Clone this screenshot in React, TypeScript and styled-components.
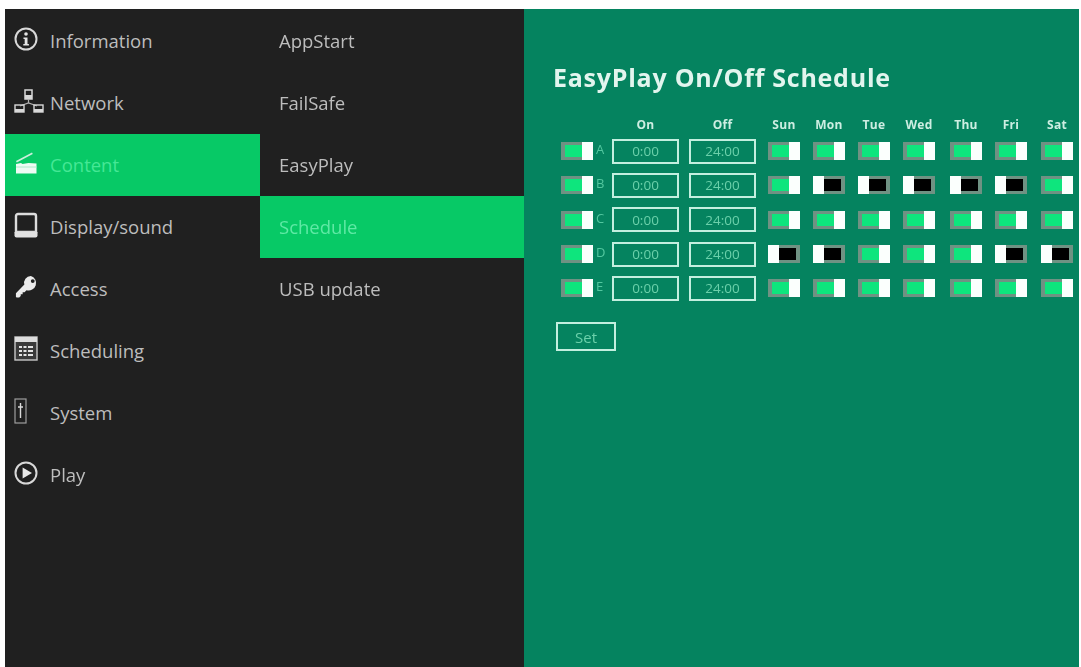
import { Fragment, ReactNode } from "react";
import styled, { createGlobalStyle } from "styled-components";

const GlobalStyle = createGlobalStyle`
  html, body {
    margin: 0;
    padding: 0;
    height: 100%;
    background: #fff;
    overflow: hidden;
    font-family: "Open Sans", "Noto Sans", sans-serif;
  }
`;

const Page = styled.div`
  display: grid;
  grid-template-columns: 519px 555px;
  height: 658px;
  padding: 9px 2px 0 5px;
  filter: blur(0.45px);
`;

const Sidebar = styled.div`
  display: grid;
  grid-template-columns: 255px 264px;
  background: #202020;
  padding-top: 1px;
`;

const NavList = styled.ul`
  list-style: none;
  margin: 0;
  padding: 0;
`;

const NavItem = styled.li<{ $active?: boolean }>`
  display: flex;
  align-items: center;
  height: 62px;
  box-sizing: border-box;
  padding-bottom: 2px;
  background: ${(p) => (p.$active ? "#07c966" : "transparent")};
  color: ${(p) => (p.$active ? "#45e795" : "#bdbdbd")};
  font-size: 18.5px;
`;

const MainNavItem = styled(NavItem)`
  padding-left: 9px;
`;

const SubNavItem = styled(NavItem)<{ $active?: boolean }>`
  padding-left: 19px;
  color: ${(p) => (p.$active ? "#5fe9a5" : "#bdbdbd")};
`;

const IconSlot = styled.span`
  display: flex;
  align-items: center;
  justify-content: flex-start;
  width: 26px;
  height: 26px;
  margin: 0 10px 3px 0;
  flex: none;
`;

const Main = styled.div`
  background: #05835f;
  padding: 51px 0 0 29px;
`;

const Title = styled.h1`
  margin: 0 0 19px;
  font-size: 25px;
  letter-spacing: 0.75px;
  line-height: 34px;
  font-weight: 700;
  white-space: nowrap;
  color: #e2f5ee;
`;

const Schedule = styled.div`
  display: grid;
  grid-template-columns: 51px 67px 10px 67px 12px 32px 13px 32px 13px 32px 13px 32px 15px 32px 13px 32px 14px 32px;
  grid-template-rows: 21px;
  grid-auto-rows: 34.3px;
  margin-left: 8px;
  width: 520px;
`;

const HeadCell = styled.div<{ $col: number }>`
  grid-column: ${(p) => p.$col};
  display: flex;
  align-items: center;
  justify-content: center;
  white-space: nowrap;
  height: 22px;
  font-size: 12px;
  letter-spacing: 0.3px;
  font-weight: 700;
  color: #cdeee2;
`;

const RowHead = styled.div`
  grid-column: 1;
  display: flex;
  align-items: center;
  gap: 3px;
`;

const RowLabel = styled.span`
  font-size: 13px;
  line-height: 13px;
  margin-bottom: 3px;
  color: #53c79f;
`;

const TimeCell = styled.div<{ $col: number }>`
  grid-column: ${(p) => p.$col};
  display: flex;
  align-items: center;
`;

const TimeBox = styled.div`
  width: 100%;
  height: 25px;
  box-sizing: border-box;
  border: 2px solid #c3efdf;
  display: flex;
  align-items: center;
  justify-content: center;
  font-size: 13.5px;
  color: #6bd0aa;
`;

const DayCell = styled.div<{ $col: number }>`
  grid-column: ${(p) => p.$col};
  display: flex;
  align-items: center;
`;

const Toggle = styled.div<{ $on: boolean }>`
  width: 32px;
  height: 18px;
  flex: none;
  box-sizing: border-box;
  background: ${(p) => (p.$on ? "#0ee57d" : "#000")};
  border: 3px solid #6f9283;
  border-left-width: ${(p) => (p.$on ? "4px" : "0")};
  border-right-width: ${(p) => (p.$on ? "0" : "4px")};
  position: relative;
`;

const Knob = styled.span<{ $on: boolean }>`
  position: absolute;
  top: -3px;
  bottom: -3px;
  width: 11px;
  background: #fbfffd;
  ${(p) => (p.$on ? "right: 0;" : "left: 0;")}
`;

const SetButton = styled.button`
  display: block;
  margin: 17px 0 0 3px;
  width: 60px;
  height: 29px;
  padding: 0;
  box-sizing: border-box;
  background: transparent;
  border: 2px solid #c3efdf;
  font: 400 15px "Open Sans", sans-serif;
  color: #6bd0aa;
`;

const InfoIcon = () => (
  <svg width="24" height="24" viewBox="0 0 24 24">
    <circle cx="12" cy="12" r="10.5" fill="none" stroke="#d8d8d8" strokeWidth="2" />
    <circle cx="12" cy="7" r="1.8" fill="#e4e4e4" />
    <path d="M9.5 10.4h4v6.6h1.4v1.6H9.3V17h1.4v-5H9.5z" fill="#e4e4e4" />
  </svg>
);

const NetworkIcon = () => (
  <svg width="30" height="24" viewBox="0 0 30 24" style={{ flex: "none" }}>
    <rect x="11" y="1" width="7" height="9" fill="none" stroke="#d8d8d8" strokeWidth="1.5" />
    <rect x="11" y="6" width="7" height="4" fill="#d8d8d8" />
    <path d="M14.5 10v4M6 17l8.5-3 8.5 3" fill="none" stroke="#b0b0b0" strokeWidth="1.2" />
    <rect x="1" y="16" width="9" height="7" fill="none" stroke="#d8d8d8" strokeWidth="1.4" />
    <rect x="1" y="20" width="9" height="3" fill="#d8d8d8" />
    <rect x="20" y="16" width="9" height="7" fill="none" stroke="#d8d8d8" strokeWidth="1.4" />
    <rect x="20" y="20" width="9" height="3" fill="#d8d8d8" />
  </svg>
);

const ClapperIcon = () => (
  <svg width="24" height="24" viewBox="0 0 24 24">
    <path d="M2 10L18 1.5l.8 1.4L2.8 11.4z" fill="#cdeedd" />
    <path d="M2 13l5-1 1.5 1 6-1 8 .5v10H2z" fill="#eefbf4" />
    <path d="M2 16h21" stroke="#9fe6c2" strokeWidth=".8" />
  </svg>
);

const MonitorIcon = () => (
  <svg width="24" height="26" viewBox="0 0 24 26">
    <path d="M2 4a2 2 0 012-2h16a2 2 0 012 2v16H2z" fill="none" stroke="#dcdcdc" strokeWidth="2.4" />
    <path d="M.5 20h23v3.5a2 2 0 01-2 2h-19a2 2 0 01-2-2z" fill="#e2e2e2" />
  </svg>
);

const KeyIcon = () => (
  <svg width="25" height="25" viewBox="0 0 26 26">
    <path
      d="M17.5 2a7 7 0 00-6.7 9L2 20v3.6c0 .5.4.9 1 .9h2.4l1.6-1.6v-1.9h2v-2h2l2-2.2a7 7 0 104.5-14.8zm2 3.4a2 2 0 110 4 2 2 0 010-4z"
      fill="#ececec"
      fillRule="evenodd"
    />
  </svg>
);

const CalendarIcon = () => (
  <svg width="24" height="25" viewBox="0 0 24 25">
    <rect x="1" y="1" width="22" height="23" fill="#3a3a3a" stroke="#c8c8c8" strokeWidth="1.4" />
    <rect x="1" y="1" width="22" height="5" fill="#dddddd" />
    <path d="M5 10h3v2H5zM9.5 10h3v2h-3zM14 10h5v2h-5zM5 14h3v2H5zM9.5 14h3v2h-3zM14 14h5v2h-5zM5 18h3v2H5zM9.5 18h3v2h-3zM14 18h5v2h-5z" fill="#e4e4e4" />
  </svg>
);

const SystemIcon = () => (
  <svg width="14" height="26" viewBox="0 0 14 26">
    <rect x="1" y="1" width="11" height="24" fill="none" stroke="#9e9e9e" strokeWidth="1.2" />
    <path d="M6.5 5v15M4 9h5" stroke="#dadada" strokeWidth="1.4" fill="none" />
  </svg>
);

const PlayIcon = () => (
  <svg width="24" height="24" viewBox="0 0 24 24">
    <circle cx="12" cy="12" r="10.5" fill="none" stroke="#d8d8d8" strokeWidth="2" />
    <path d="M8.6 6.6L18 12l-9.4 5.4z" fill="#e8e8e8" />
  </svg>
);

const mainNav: { label: string; icon: ReactNode; active?: boolean }[] = [
  { label: "Information", icon: <InfoIcon /> },
  { label: "Network", icon: <NetworkIcon /> },
  { label: "Content", icon: <ClapperIcon />, active: true },
  { label: "Display/sound", icon: <MonitorIcon /> },
  { label: "Access", icon: <KeyIcon /> },
  { label: "Scheduling", icon: <CalendarIcon /> },
  { label: "System", icon: <SystemIcon /> },
  { label: "Play", icon: <PlayIcon /> },
];

const subNav = ["AppStart", "FailSafe", "EasyPlay", "Schedule", "USB update"];

const days = ["Sun", "Mon", "Tue", "Wed", "Thu", "Fri", "Sat"];

const rows: { label: string; days: number[] }[] = [
  { label: "A", days: [1, 1, 1, 1, 1, 1, 1] },
  { label: "B", days: [1, 0, 0, 0, 0, 0, 1] },
  { label: "C", days: [1, 1, 1, 1, 1, 1, 1] },
  { label: "D", days: [0, 0, 1, 1, 1, 0, 0] },
  { label: "E", days: [1, 1, 1, 1, 1, 1, 1] },
];

const Switch = ({ on }: { on: boolean }) => (
  <Toggle $on={on}>
    <Knob $on={on} />
  </Toggle>
);

export default function App() {
  return (
    <>
      <GlobalStyle />
      <Page>
        <Sidebar>
          <NavList>
            {mainNav.map((item) => (
              <MainNavItem key={item.label} $active={item.active}>
                <IconSlot>{item.icon}</IconSlot>
                {item.label}
              </MainNavItem>
            ))}
          </NavList>
          <NavList>
            {subNav.map((item) => (
              <SubNavItem key={item} $active={item === "Schedule"}>
                {item}
              </SubNavItem>
            ))}
          </NavList>
        </Sidebar>
        <Main>
          <Title>EasyPlay On/Off Schedule</Title>
          <Schedule>
            <HeadCell $col={2}>On</HeadCell>
            <HeadCell $col={4}>Off</HeadCell>
            {days.map((d, i) => (
              <HeadCell key={d} $col={6 + i * 2}>
                {d}
              </HeadCell>
            ))}
            {rows.map((row) => (
              <Fragment key={row.label}>
                <RowHead>
                  <Switch on />
                  <RowLabel>{row.label}</RowLabel>
                </RowHead>
                <TimeCell $col={2}>
                  <TimeBox>0:00</TimeBox>
                </TimeCell>
                <TimeCell $col={4}>
                  <TimeBox>24:00</TimeBox>
                </TimeCell>
                {row.days.map((v, i) => (
                  <DayCell key={i} $col={6 + i * 2}>
                    <Switch on={v === 1} />
                  </DayCell>
                ))}
              </Fragment>
            ))}
          </Schedule>
          <SetButton>Set</SetButton>
        </Main>
      </Page>
    </>
  );
}
